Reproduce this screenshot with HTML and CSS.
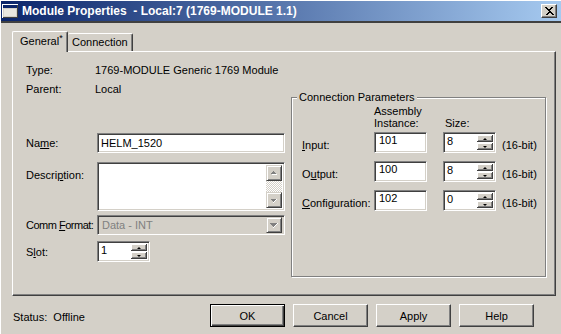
FILE: index.html
```html
<!DOCTYPE html>
<html lang="en">
<head>
    <meta charset="UTF-8">
    <meta name="viewport" content="width=device-width, initial-scale=1.0">
    <title>Module Properties</title>
    <link rel="stylesheet" href="styles.css">
</head>
<body>
    <div class="window">
        <div class="titlebar">
            <svg class="title-icon" width="16" height="14" viewBox="0 0 16 14" shape-rendering="crispEdges">
                <rect x="0" y="0" width="16" height="14" fill="#fff"/>
                <rect x="1" y="1" width="15" height="13" fill="#404040"/>
                <rect x="1" y="1" width="14" height="12" fill="#d4d0c8"/>
                <rect x="1" y="1" width="14" height="3" fill="#0a246a"/>
                <rect x="2" y="5" width="12" height="7" fill="#e8e6e0"/>
            </svg>
            <span class="title-text">Module Properties &nbsp;- Local:7 (1769-MODULE 1.1)</span>
            <div class="close-btn">
                <svg width="10" height="9" viewBox="0 0 10 9" shape-rendering="crispEdges">
                    <path d="M1 0h2v1h1v1h2v-1h1v-1h2v1h-1v1h-1v1h-1v1h1v1h1v1h1v1h1v1h-2v-1h-1v-1h-2v1h-1v1h-2v-1h1v-1h1v-1h1v-1h-1v-1h-1v-1h-1z" fill="#000"/>
                </svg>
            </div>
        </div>

        <div class="client">
            <div class="tabs">
                <div class="tab active">General<sup>*</sup></div>
                <div class="tab">Connection</div>
            </div>

            <div class="panel">
                <div class="general">
                    <div class="info-row"><span class="info-label">Type:</span><span>1769-MODULE Generic 1769 Module</span></div>
                    <div class="info-row"><span class="info-label">Parent:</span><span>Local</span></div>

                    <div class="field-row name-row">
                        <span class="field-label">Na<u>m</u>e:</span>
                        <div class="edit wide">HELM_1520</div>
                    </div>

                    <div class="field-row desc-row">
                        <span class="field-label desc-label">Descri<u>p</u>tion:</span>
                        <div class="edit wide memo">
                            <div class="memo-text"></div>
                            <div class="vscroll">
                                <div class="sbtn">
                                    <svg width="16" height="16" viewBox="0 0 16 16" shape-rendering="crispEdges">
                                        <path d="M8 7h1v1h1v1h1v1h-5v-1h1v-1h1z" fill="#fff"/>
                                        <path d="M7 6h1v1h1v1h1v1h-5v-1h1v-1h1z" fill="#808080"/>
                                    </svg>
                                </div>
                                <div class="track"></div>
                                <div class="sbtn">
                                    <svg width="16" height="16" viewBox="0 0 16 16" shape-rendering="crispEdges">
                                        <path d="M5 7h5v1h-1v1h-1v1h-1v-1h-1v-1h-1z" fill="#808080"/>
                                        <path d="M10 7h1v1h-1v1h-1v1h-1v1h-1v-1h1v-1h1v-1h1z" fill="#fff"/>
                                    </svg>
                                </div>
                            </div>
                        </div>
                    </div>

                    <div class="field-row comm-row">
                        <span class="field-label comm-label">Comm <u>F</u>ormat:</span>
                        <div class="edit wide combo">
                            <span class="combo-text">Data - INT</span>
                            <div class="sbtn">
                                <svg width="16" height="16" viewBox="0 0 16 16" shape-rendering="crispEdges">
                                    <path d="M4 6h7v1h-1v1h-1v1h-1v1h-1v-1h-1v-1h-1v-1h-1z" fill="#808080"/>
                                    <path d="M11 6h1v1h-1v1h-1v1h-1v1h-1v1h-1v-1h1v-1h1v-1h1v-1h1z" fill="#fff"/>
                                </svg>
                            </div>
                        </div>
                    </div>

                    <div class="field-row slot-row">
                        <span class="field-label">S<u>l</u>ot:</span>
                        <div class="edit spin">
                            <span class="spin-text">1</span>
                            <div class="updown"><div class="ud up"></div><div class="ud down"></div></div>
                        </div>
                    </div>
                </div>

                <div class="group">
                    <span class="legend">Connection Parameters</span>
                    <div class="group-head">
                        <div class="head-asm">Assembly<br>Instance:</div>
                        <div class="head-size">Size:</div>
                    </div>

                    <div class="param-row">
                        <span class="param-label"><u>I</u>nput:</span>
                        <div class="edit small">101</div>
                        <div class="edit spin"><span class="spin-text">8</span><div class="updown"><div class="ud up"></div><div class="ud down"></div></div></div>
                        <span class="bits">(16-bit)</span>
                    </div>
                    <div class="param-row">
                        <span class="param-label">O<u>u</u>tput:</span>
                        <div class="edit small">100</div>
                        <div class="edit spin"><span class="spin-text">8</span><div class="updown"><div class="ud up"></div><div class="ud down"></div></div></div>
                        <span class="bits">(16-bit)</span>
                    </div>
                    <div class="param-row">
                        <span class="param-label"><u>C</u>onfiguration:</span>
                        <div class="edit small">102</div>
                        <div class="edit spin"><span class="spin-text">0</span><div class="updown"><div class="ud up"></div><div class="ud down"></div></div></div>
                        <span class="bits">(16-bit)</span>
                    </div>
                </div>
            </div>

            <div class="footer">
                <span class="status">Status:&nbsp; Offline</span>
                <div class="buttons">
                    <button class="btn default">OK</button>
                    <button class="btn">Cancel</button>
                    <button class="btn">Apply</button>
                    <button class="btn">Help</button>
                </div>
            </div>
        </div>
    </div>
</body>
</html>
```

FILE: styles.css
```css
body {
    margin: 0;
    background-color: #d4d0c8;
    font-family: "Liberation Sans", Arial, sans-serif;
    font-size: 11px;
    color: #000;
}
.window {
    height: 334px;
    box-sizing: border-box;
    padding: 1px 0 0 1px;
    box-shadow: inset 1px 1px 0 #fff;
    overflow: hidden;
}

/* title bar */
.titlebar {
    display: flex;
    align-items: center;
    height: 20px;
    background: linear-gradient(to right, #0a246a, #a6caf0);
    border-bottom: 2px solid #404040;
}
.title-icon {
    margin-left: 1px;
    flex-shrink: 0;
}
.title-text {
    margin-left: 4px;
    color: #fff;
    font-weight: bold;
    font-size: 12px;
    white-space: nowrap;
}
.close-btn {
    margin-left: auto;
    margin-right: 4px;
    width: 16px;
    height: 14px;
    box-sizing: border-box;
    display: flex;
    align-items: center;
    justify-content: center;
    background-color: #d4d0c8;
    border-top: 1px solid #fff;
    border-left: 1px solid #fff;
    border-right: 1px solid #404040;
    border-bottom: 1px solid #404040;
    box-shadow: inset -1px -1px 0 #808080;
}

/* client area */
.client {
    padding: 8px 5px 0 11px;
}
.tabs {
    display: flex;
    align-items: flex-end;
    height: 20px;
}
.tab {
    box-sizing: border-box;
    height: 18px;
    line-height: 17px;
    padding-left: 4px;
    width: 65px;
    border-top: 1px solid #fff;
    border-right: 1px solid #404040;
    box-shadow: inset -1px 0 0 #808080;
    border-radius: 2px 2px 0 0;
}
.tab.active {
    position: relative;
    z-index: 1;
    width: 56px;
    height: 21px;
    margin-bottom: -1px;
    padding-left: 7px;
    line-height: 18px;
    border-left: 1px solid #fff;
    background-color: #d4d0c8;
}
.tab sup {
    font-size: 9px;
    vertical-align: 4px;
    line-height: 0;
}
.panel {
    display: flex;
    align-items: flex-start;
    box-sizing: border-box;
    height: 245px;
    padding: 9px 0 0 13px;
    border-top: 1px solid #fff;
    border-left: 1px solid #fff;
    border-right: 1px solid #404040;
    border-bottom: 1px solid #404040;
    box-shadow: inset -1px -1px 0 #808080;
}

/* general column */
.general {
    width: 265px;
    flex-shrink: 0;
}
.info-row {
    display: flex;
    height: 19px;
    line-height: 19px;
}
.info-label {
    width: 69px;
    color: #000;
}
.field-row {
    display: flex;
    align-items: center;
}
.field-label {
    width: 71px;
    flex-shrink: 0;
    white-space: nowrap;
}
.comm-label {
    letter-spacing: -0.5px;
}
.name-row {
    margin-top: 34px;
}
.desc-row {
    margin-top: 9px;
    align-items: flex-start;
}
.desc-label {
    margin-top: 7px;
}
.comm-row {
    margin-top: 4px;
}
.slot-row {
    margin-top: 6px;
}

/* sunken edit boxes */
.edit {
    box-sizing: border-box;
    background-color: #fff;
    border-top: 1px solid #808080;
    border-left: 1px solid #808080;
    border-right: 1px solid #fff;
    border-bottom: 1px solid #fff;
    box-shadow: inset 1px 1px 0 #404040, inset -1px -1px 0 #d4d0c8;
    padding: 1px 0 0 3px;
    line-height: 16px;
    white-space: nowrap;
}
.edit.wide {
    width: 188px;
    height: 20px;
}
.edit.memo {
    height: 49px;
    display: flex;
    padding: 2px;
}
.memo-text {
    flex: 1;
}
.vscroll {
    width: 16px;
    display: flex;
    flex-direction: column;
}
.track {
    flex: 1;
    background: repeating-conic-gradient(#fff 0 25%, #d4d0c8 0 50%) 0 0 / 2px 2px;
}
.sbtn {
    box-sizing: border-box;
    width: 16px;
    height: 16px;
    background-color: #d4d0c8;
    border-top: 1px solid #d4d0c8;
    border-left: 1px solid #d4d0c8;
    border-right: 1px solid #404040;
    border-bottom: 1px solid #404040;
    box-shadow: inset 1px 1px 0 #fff, inset -1px -1px 0 #808080;
    position: relative;
}
.sbtn svg {
    position: absolute;
    left: -1px;
    top: -1px;
}
.edit.combo {
    display: flex;
    align-items: center;
    padding: 2px;
    background-color: #d4d0c8;
    color: #808080;
}
.combo-text {
    flex: 1;
    padding-left: 2px;
}
.edit.small {
    width: 53px;
    height: 21px;
    padding: 0 0 0 4px;
    line-height: 14px;
}
.edit.spin {
    display: flex;
    width: 53px;
    height: 21px;
    padding: 2px 2px 2px 3px;
    line-height: 13px;
}
.spin-text {
    flex: 1;
}
.updown {
    width: 16px;
    display: flex;
    flex-direction: column;
    gap: 1px;
}
.ud {
    flex: 1;
    box-sizing: border-box;
    background-color: #d4d0c8;
    border-right: 1px solid #404040;
    border-bottom: 1px solid #404040;
    box-shadow: inset 1px 1px 0 #fff, inset -1px -1px 0 #808080;
    position: relative;
}
.ud::after {
    content: "";
    position: absolute;
    left: 6px;
    top: 3px;
    border-left: 2px solid transparent;
    border-right: 2px solid transparent;
}
.ud.up::after {
    border-bottom: 2px solid #000;
}
.ud.down::after {
    border-top: 2px solid #000;
}

/* connection parameters group */
.group {
    position: relative;
    box-sizing: border-box;
    width: 255px;
    height: 180px;
    margin: 36px 0 0 0;
    padding: 7px 0 0 10px;
    border: 1px solid #808080;
    box-shadow: 1px 1px 0 #fff, inset 1px 1px 0 #fff;
}
.legend {
    position: absolute;
    top: -7px;
    left: 5px;
    padding: 0 2px;
    line-height: 13px;
    background-color: #d4d0c8;
}
.group-head {
    display: flex;
    align-items: flex-end;
    padding-left: 72px;
    line-height: 12px;
}
.head-asm {
    width: 71px;
}
.param-row {
    display: flex;
    align-items: center;
    margin-top: 8px;
}
.group-head + .param-row {
    margin-top: 3px;
}
.param-label {
    width: 72px;
    padding-top: 4px;
}
.param-row .edit.small {
    margin-right: 16px;
}
.bits {
    margin-left: 6px;
    padding-top: 4px;
}

/* footer */
.footer {
    display: flex;
    align-items: center;
    padding: 8px 22px 0 1px;
}
.status {
    flex: 1;
    padding-top: 3px;
}
.buttons {
    display: flex;
    gap: 8px;
}
.btn {
    box-sizing: border-box;
    width: 75px;
    height: 23px;
    padding: 0;
    font-family: inherit;
    font-size: 11px;
    color: #000;
    background-color: #d4d0c8;
    border-top: 1px solid #fff;
    border-left: 1px solid #fff;
    border-right: 1px solid #404040;
    border-bottom: 1px solid #404040;
    border-radius: 0;
    box-shadow: inset -1px -1px 0 #808080;
}
.btn.default {
    border: 1px solid #000;
    box-shadow: inset 1px 1px 0 #fff, inset -1px -1px 0 #404040, inset -2px -2px 0 #808080;
}
```
